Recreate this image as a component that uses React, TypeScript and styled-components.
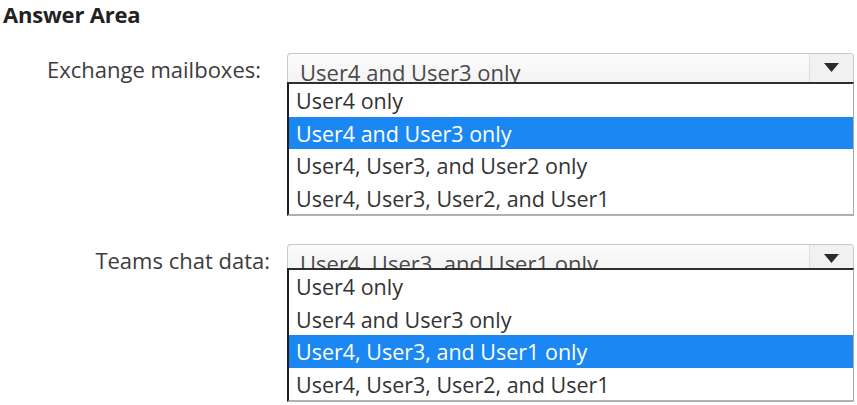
import styled, { createGlobalStyle } from 'styled-components';

const GlobalStyle = createGlobalStyle`
  html, body {
    margin: 0;
    padding: 0;
    background: #ffffff;
  }
  body {
    font-family: "Open Sans", "Noto Sans", "Liberation Sans", sans-serif;
    color: #333333;
  }
`;

const Page = styled.div`
  width: 857px;
  height: 405px;
  overflow: hidden;
  padding-left: 3px;
  box-sizing: border-box;
`;

const Title = styled.h1`
  margin: 0;
  font-size: 22px;
  line-height: 28px;
  font-weight: 700;
  color: #222222;
  letter-spacing: -0.2px;
`;

const Form = styled.div`
  display: grid;
  grid-template-columns: 284px 567px;
  row-gap: 28px;
  margin-top: 25px;
`;

const Label = styled.div<{ $gap: number }>`
  justify-self: end;
  padding-right: ${(p) => p.$gap}px;
  font-size: 22px;
  line-height: 32px;
  color: #3c3c3c;
`;

const Control = styled.div`
  display: flex;
  flex-direction: column;
`;

const SelectBox = styled.div<{ $visible: number }>`
  display: flex;
  height: ${(p) => p.$visible}px;
  border: 1px solid #c8c8c8;
  border-bottom: none;
  border-radius: 4px 4px 0 0;
  background: linear-gradient(#fbfbfb, #f4f4f4);
  overflow: hidden;
  box-sizing: border-box;
`;

const SelectValue = styled.div`
  flex: 1;
  padding: 5px 0 0 12px;
  font-size: 22px;
  line-height: 26px;
  color: #4a4a4a;
  white-space: nowrap;
`;

const ArrowButton = styled.div`
  width: 44px;
  display: flex;
  justify-content: center;
  padding-top: 9px;
  border-left: 1px solid #dddddd;
  background: #f1f1f1;
  box-sizing: border-box;
`;

const Options = styled.div`
  border-top: 2px solid #2e2e2e;
  border-left: 2px solid #1e1e1e;
  border-right: 1px solid #a8a8a8;
  border-bottom: 2px solid #b0b0b0;
  background: #ffffff;
`;

const Option = styled.div<{ $selected?: boolean }>`
  height: 32.5px;
  padding: 2px 0 0 7px;
  box-sizing: border-box;
  font-size: 21.5px;
  line-height: 30px;
  white-space: nowrap;
  color: ${(p) => (p.$selected ? '#ffffff' : '#333333')};
  background: ${(p) => (p.$selected ? '#1a87f2' : 'transparent')};
`;

const Caret = () => (
  <svg width="15" height="9" viewBox="0 0 15 9">
    <path d="M0 0 L15 0 L7.5 9 Z" fill="#2a2a2a" />
  </svg>
);

const choices = [
  'User4 only',
  'User4 and User3 only',
  'User4, User3, and User2 only',
  'User4, User3, User2, and User1',
];

const teamsChoices = [
  'User4 only',
  'User4 and User3 only',
  'User4, User3, and User1 only',
  'User4, User3, User2, and User1',
];

type DropdownProps = {
  value: string;
  options: string[];
  visible: number;
};

const Dropdown = ({ value, options, visible }: DropdownProps) => (
  <Control>
    <SelectBox $visible={visible}>
      <SelectValue>{value}</SelectValue>
      <ArrowButton>
        <Caret />
      </ArrowButton>
    </SelectBox>
    <Options>
      {options.map((o) => (
        <Option key={o} $selected={o === value}>
          {o}
        </Option>
      ))}
    </Options>
  </Control>
);

export default function App() {
  return (
    <>
      <GlobalStyle />
      <Page>
        <Title>Answer Area</Title>
        <Form>
          <Label $gap={26}>Exchange mailboxes:</Label>
          <Dropdown value="User4 and User3 only" options={choices} visible={29} />
          <Label $gap={17}>Teams chat data:</Label>
          <Dropdown value="User4, User3, and User1 only" options={teamsChoices} visible={24} />
        </Form>
      </Page>
    </>
  );
}
